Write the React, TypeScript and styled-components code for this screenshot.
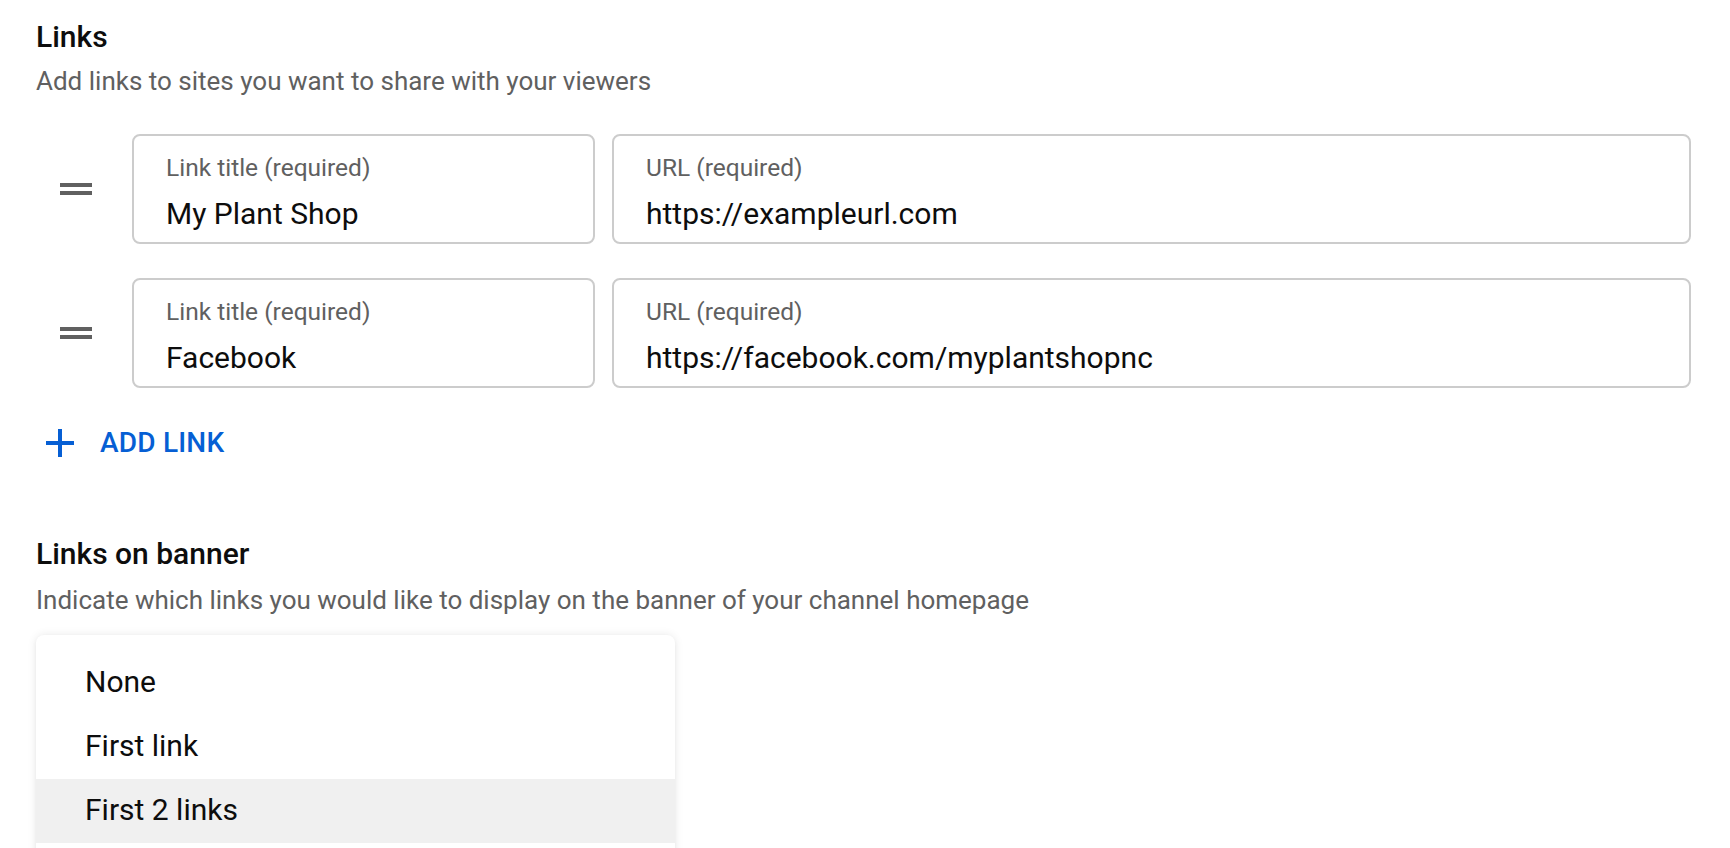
import React from "react";
import styled, { createGlobalStyle } from "styled-components";

const Global = createGlobalStyle`
  html, body {
    margin: 0;
    padding: 0;
    background: #ffffff;
    overflow: hidden;
  }
  body {
    font-family: Roboto, "Noto Sans", Arial, sans-serif;
    -webkit-font-smoothing: antialiased;
  }
  * { box-sizing: border-box; }
`;

const Page = styled.div`
  width: 1730px;
  height: 848px;
  overflow: hidden;
  padding: 17px 39px 0 36px;
  display: flex;
  flex-direction: column;
`;

const SectionTitle = styled.h2<{ $top?: number }>`
  margin: ${(p) => p.$top ?? 0}px 0 0 0;
  font-size: 30px;
  line-height: 40px;
  font-weight: 500;
  color: #0d0d0d;
`;

const Description = styled.p<{ $top: number }>`
  margin: ${(p) => p.$top}px 0 0 0;
  font-size: 26px;
  line-height: 36px;
  font-weight: 400;
  color: #606060;
`;

const LinkList = styled.div`
  margin-top: 35px;
  display: flex;
  flex-direction: column;
  gap: 34px;
`;

const LinkRow = styled.div`
  display: flex;
  align-items: center;
`;

const DragHandle = styled.div`
  width: 32px;
  margin-left: 24px;
  margin-right: 40px;
  display: flex;
  flex-direction: column;
  gap: 4px;
  flex-shrink: 0;
`;

const HandleBar = styled.span`
  display: block;
  height: 4px;
  background: #606060;
`;

const Field = styled.div<{ $grow?: boolean; $width?: number }>`
  height: 110px;
  border: 2px solid #cccccc;
  border-radius: 8px;
  padding: 18px 32px 0 32px;
  display: flex;
  flex-direction: column;
  ${(p) => (p.$grow ? "flex: 1;" : `width: ${p.$width}px; flex-shrink: 0;`)}
`;

const FieldLabel = styled.label`
  font-size: 24.5px;
  line-height: 28px;
  color: #606060;
`;

const FieldValue = styled.div`
  margin-top: 12px;
  font-size: 30px;
  line-height: 40px;
  color: #0d0d0d;
  white-space: nowrap;
`;

const Fields = styled.div`
  flex: 1;
  display: flex;
  gap: 17px;
`;

const AddButton = styled.button`
  margin-top: 38px;
  align-self: flex-start;
  height: 56px;
  border: none;
  background: transparent;
  padding: 0 8px 0 10px;
  display: flex;
  align-items: center;
  gap: 26px;
  font-family: Roboto, "Noto Sans", Arial, sans-serif;
  font-size: 28px;
  font-weight: 500;
  color: #065fd4;
  letter-spacing: 0.2px;
  cursor: pointer;
`;

const Menu = styled.ul`
  margin: 17px 0 0 0;
  width: 639px;
  list-style: none;
  padding: 16px 0 16px 0;
  background: #ffffff;
  border-radius: 8px;
  box-shadow: 0 0 10px rgba(0, 0, 0, 0.09), 0 2px 4px rgba(0, 0, 0, 0.04);
`;

const MenuItem = styled.li<{ $active?: boolean }>`
  height: 64px;
  padding: 0 0 4px 49px;
  display: flex;
  align-items: center;
  font-size: 30px;
  color: #0d0d0d;
  background: ${(p) => (p.$active ? "#f0f0f0" : "transparent")};
`;

const PlusIcon = () => (
  <svg width="28" height="28" viewBox="0 0 28 28" aria-hidden="true">
    <rect x="12" y="0" width="4" height="28" fill="#065fd4" />
    <rect x="0" y="12" width="28" height="4" fill="#065fd4" />
  </svg>
);

const links = [
  { title: "My Plant Shop", url: "https://exampleurl.com" },
  { title: "Facebook", url: "https://facebook.com/myplantshopnc" },
];

const options = ["None", "First link", "First 2 links"];

export default function App() {
  return (
    <>
      <Global />
      <Page>
        <SectionTitle>Links</SectionTitle>
        <Description $top={6}>Add links to sites you want to share with your viewers</Description>
        <LinkList>
          {links.map((l) => (
            <LinkRow key={l.title}>
              <DragHandle>
                <HandleBar />
                <HandleBar />
              </DragHandle>
              <Fields>
                <Field $width={463}>
                  <FieldLabel>Link title (required)</FieldLabel>
                  <FieldValue>{l.title}</FieldValue>
                </Field>
                <Field $grow>
                  <FieldLabel>URL (required)</FieldLabel>
                  <FieldValue>{l.url}</FieldValue>
                </Field>
              </Fields>
            </LinkRow>
          ))}
        </LinkList>
        <AddButton>
          <PlusIcon />
          ADD LINK
        </AddButton>
        <SectionTitle $top={75}>Links on banner</SectionTitle>
        <Description $top={8}>
          Indicate which links you would like to display on the banner of your channel homepage
        </Description>
        <Menu>
          {options.map((o, i) => (
            <MenuItem key={o} $active={i === 2}>
              {o}
            </MenuItem>
          ))}
        </Menu>
      </Page>
    </>
  );
}
